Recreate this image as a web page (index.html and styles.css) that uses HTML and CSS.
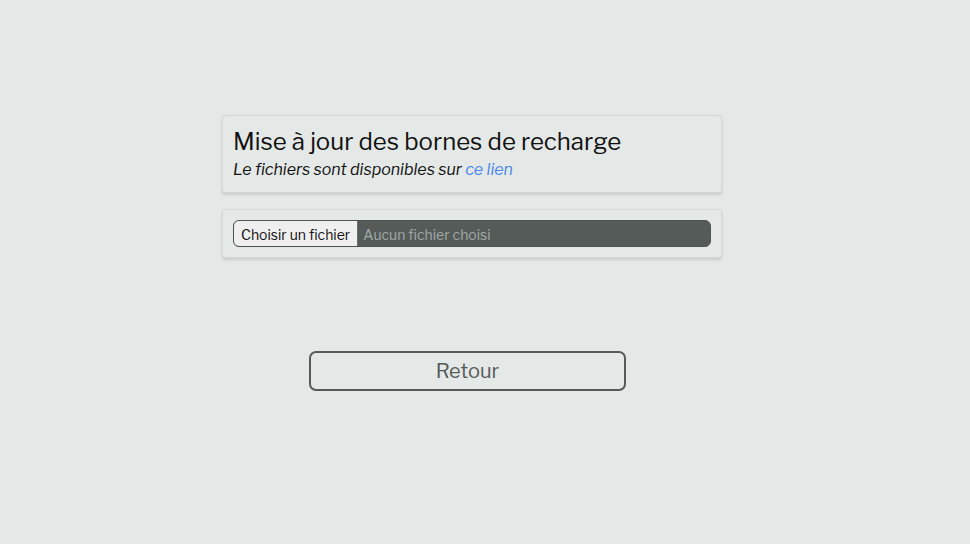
FILE: index.html
```html
<!DOCTYPE html>
<html lang="fr">
<head>
<meta charset="utf-8">
<title>Mise à jour des bornes de recharge</title>
<link rel="stylesheet" href="styles.css">
</head>
<body>
<main class="page">
  <section class="card card-title">
    <h1 class="title">Mise à jour des bornes de recharge</h1>
    <p class="subtitle">Le fichiers sont disponibles sur <a class="link" href="#">ce lien</a></p>
  </section>
  <section class="card card-file">
    <div class="file-input">
      <span class="file-btn">Choisir un fichier</span>
      <span class="file-name">Aucun fichier choisi</span>
    </div>
  </section>
  <div class="actions">
    <button class="back-btn" type="button">Retour</button>
  </div>
</main>
</body>
</html>
```

FILE: styles.css
```css
html, body {
  margin: 0;
  padding: 0;
  background: #e4e8e6;
  font-family: "Libre Franklin", "Open Sans", "Liberation Sans", sans-serif;
  color: #111;
}
.page {
  width: 500px;
  margin-left: 222px;
  padding-top: 115px;
  display: flex;
  flex-direction: column;
}
.card {
  background: #e4e8e6;
  border: 1px solid #d3d7d5;
  border-radius: 3px;
  box-shadow: 0 2px 3px rgba(0,0,0,0.12);
  padding: 10px;
}
.card-title {
  padding-top: 11px;
  height: 55px;
}
.title {
  margin: 0;
  font-size: 24px;
  font-weight: 400;
  line-height: 30px;
  color: #111;
}
.subtitle {
  margin: 0;
  font-size: 16px;
  font-style: italic;
  line-height: 25px;
  color: #111;
}
.link {
  color: #4a86f0;
  text-decoration: none;
}
.card-file {
  margin-top: 16px;
  height: 27px;
}
.file-input {
  display: flex;
  height: 27px;
  box-sizing: border-box;
  border: 1px solid #4d5452;
  border-radius: 6px;
  background: #545b59;
  overflow: hidden;
  font-size: 14px;
}
.file-btn {
  display: flex;
  align-items: center;
  padding: 1px 7px 0;
  background: #efefef;
  color: #111;
  border-right: 1px solid #6b716f;
}
.file-name {
  display: flex;
  align-items: center;
  padding: 1px 0 0 5px;
  color: #a3a9a7;
}
.actions {
  margin-top: 93px;
  padding-left: 87px;
}
.back-btn {
  width: 317px;
  height: 40px;
  background: transparent;
  border: 2px solid #555b59;
  border-radius: 7px;
  font-family: inherit;
  font-size: 20px;
  color: #555b59;
  cursor: pointer;
}
```
